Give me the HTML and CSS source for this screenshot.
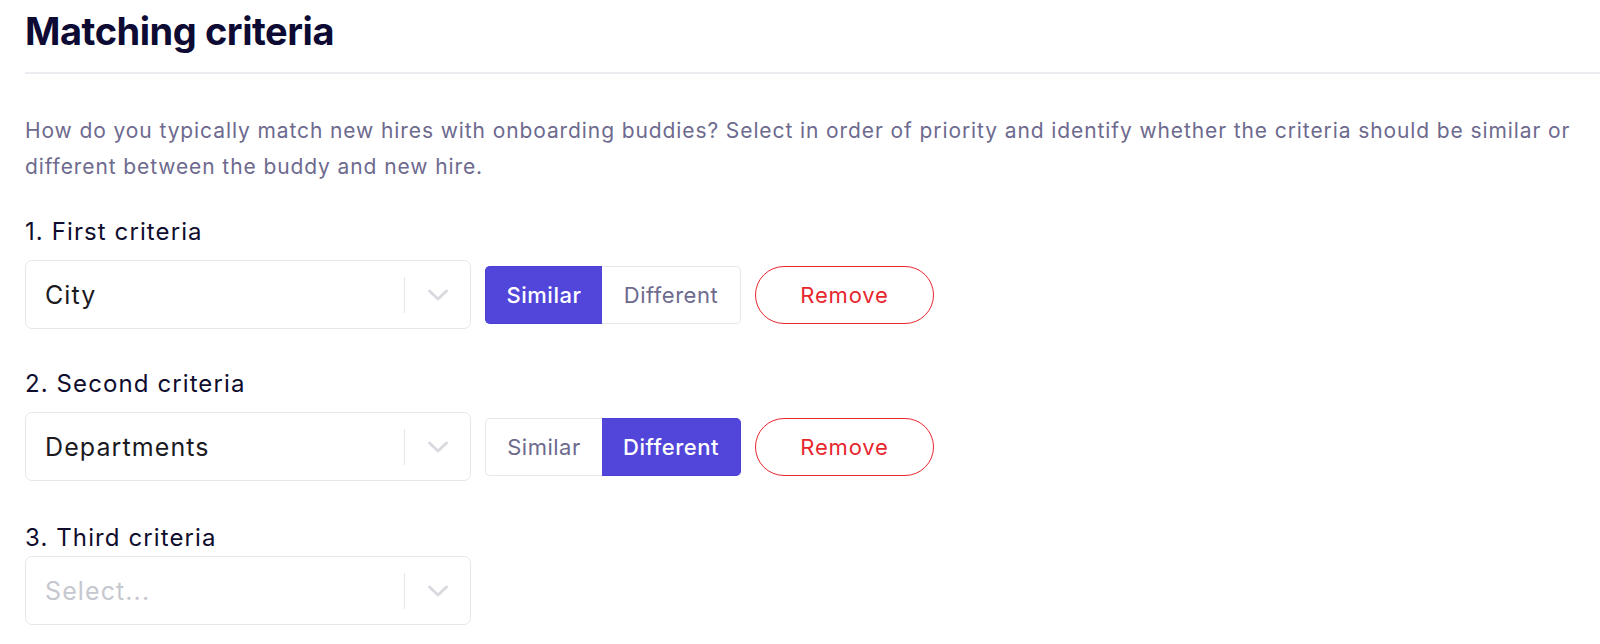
FILE: index.html
```html
<!DOCTYPE html>
<html lang="en">
<head>
<meta charset="utf-8">
<title>Matching criteria</title>
<link rel="stylesheet" href="styles.css">
</head>
<body>
<main class="page">
  <h1 class="title">Matching criteria</h1>
  <p class="intro">How do you typically match new hires with onboarding buddies? Select in order of priority and identify whether the criteria should be similar or different between the buddy and new hire.</p>

  <section class="criterion">
    <div class="label">1. First criteria</div>
    <div class="row">
      <div class="select">
        <span class="value">City</span>
        <span class="sep"></span>
        <svg class="chev" viewBox="0 0 24 24" width="24" height="24"><path d="M3.5 8 L12 16 L20.5 8" fill="none" stroke="currentColor" stroke-width="3" stroke-linecap="round" stroke-linejoin="round"/></svg>
      </div>
      <div class="toggle">
        <button class="opt opt-left active">Similar</button>
        <button class="opt opt-right">Different</button>
      </div>
      <button class="remove">Remove</button>
    </div>
  </section>

  <section class="criterion">
    <div class="label">2. Second criteria</div>
    <div class="row">
      <div class="select">
        <span class="value">Departments</span>
        <span class="sep"></span>
        <svg class="chev" viewBox="0 0 24 24" width="24" height="24"><path d="M3.5 8 L12 16 L20.5 8" fill="none" stroke="currentColor" stroke-width="3" stroke-linecap="round" stroke-linejoin="round"/></svg>
      </div>
      <div class="toggle">
        <button class="opt opt-left">Similar</button>
        <button class="opt opt-right active">Different</button>
      </div>
      <button class="remove">Remove</button>
    </div>
  </section>

  <section class="criterion criterion-last">
    <div class="label">3. Third criteria</div>
    <div class="row">
      <div class="select">
        <span class="value placeholder">Select...</span>
        <span class="sep"></span>
        <svg class="chev" viewBox="0 0 24 24" width="24" height="24"><path d="M3.5 8 L12 16 L20.5 8" fill="none" stroke="currentColor" stroke-width="3" stroke-linecap="round" stroke-linejoin="round"/></svg>
      </div>
    </div>
  </section>
</main>
</body>
</html>
```

FILE: styles.css
```css
* { box-sizing: border-box; }

html, body {
  margin: 0;
  padding: 0;
  background: #ffffff;
}

body {
  font-family: Inter, "Noto Sans", "Liberation Sans", sans-serif;
  color: #0f0d2e;
}

.page {
  padding: 0 0 0 25px;
}

.title {
  margin: 0;
  padding: 8px 0 18px;
  font-size: 38px;
  line-height: 46px;
  font-weight: 700;
  color: #0d0b33;
  letter-spacing: -0.45px;
  border-bottom: 2px solid #ececf0;
}

.intro {
  margin: 39px 0 0;
  font-size: 21px;
  line-height: 36px;
  letter-spacing: 0.9px;
  color: #6d6a8e;
}

.criterion {
  margin-top: 32px;
}

.criterion + .criterion {
  margin-top: 40px;
}

.criterion + .criterion-last {
  margin-top: 42px;
}

.label {
  font-size: 24px;
  line-height: 30px;
  letter-spacing: 1.1px;
  color: #0f0d2e;
}

.row {
  margin-top: 13px;
  display: flex;
  align-items: center;
  gap: 14px;
}

.criterion-last .row {
  margin-top: 3px;
}

.select {
  width: 446px;
  height: 69px;
  border: 1.5px solid #e6e6eb;
  border-radius: 7px;
  display: flex;
  align-items: center;
  padding-left: 19px;
  background: #fff;
}

.value {
  flex: 1;
  font-size: 25px;
  letter-spacing: 1.1px;
  color: #1a1a1f;
}

.placeholder {
  color: #c6c8cf;
}

.sep {
  width: 1.5px;
  height: 36px;
  background: #e6e6eb;
}

.chev {
  color: #d9dae0;
  margin: 0 20px 0 21px;
}

.toggle {
  display: flex;
  height: 58px;
}

.opt {
  font-family: inherit;
  font-size: 22px;
  letter-spacing: 0.5px;
  height: 58px;
  margin: 0;
  background: #fff;
  color: #6d6a8e;
  border: 1.5px solid #e6e6eb;
  cursor: pointer;
}

.opt-left {
  width: 117px;
  border-radius: 5px 0 0 5px;
  border-right: none;
}

.opt-right {
  width: 139px;
  border-radius: 0 5px 5px 0;
  border-left: none;
}

.opt.active {
  background: #5146d9;
  border-color: #4a3fd4;
  color: #ffffff;
  font-weight: 500;
}

.remove {
  font-family: inherit;
  width: 179px;
  height: 58px;
  border-radius: 29px;
  border: 1.5px solid #e8262e;
  background: #fff;
  color: #e8262e;
  font-size: 22px;
  letter-spacing: 0.8px;
  cursor: pointer;
}
```
